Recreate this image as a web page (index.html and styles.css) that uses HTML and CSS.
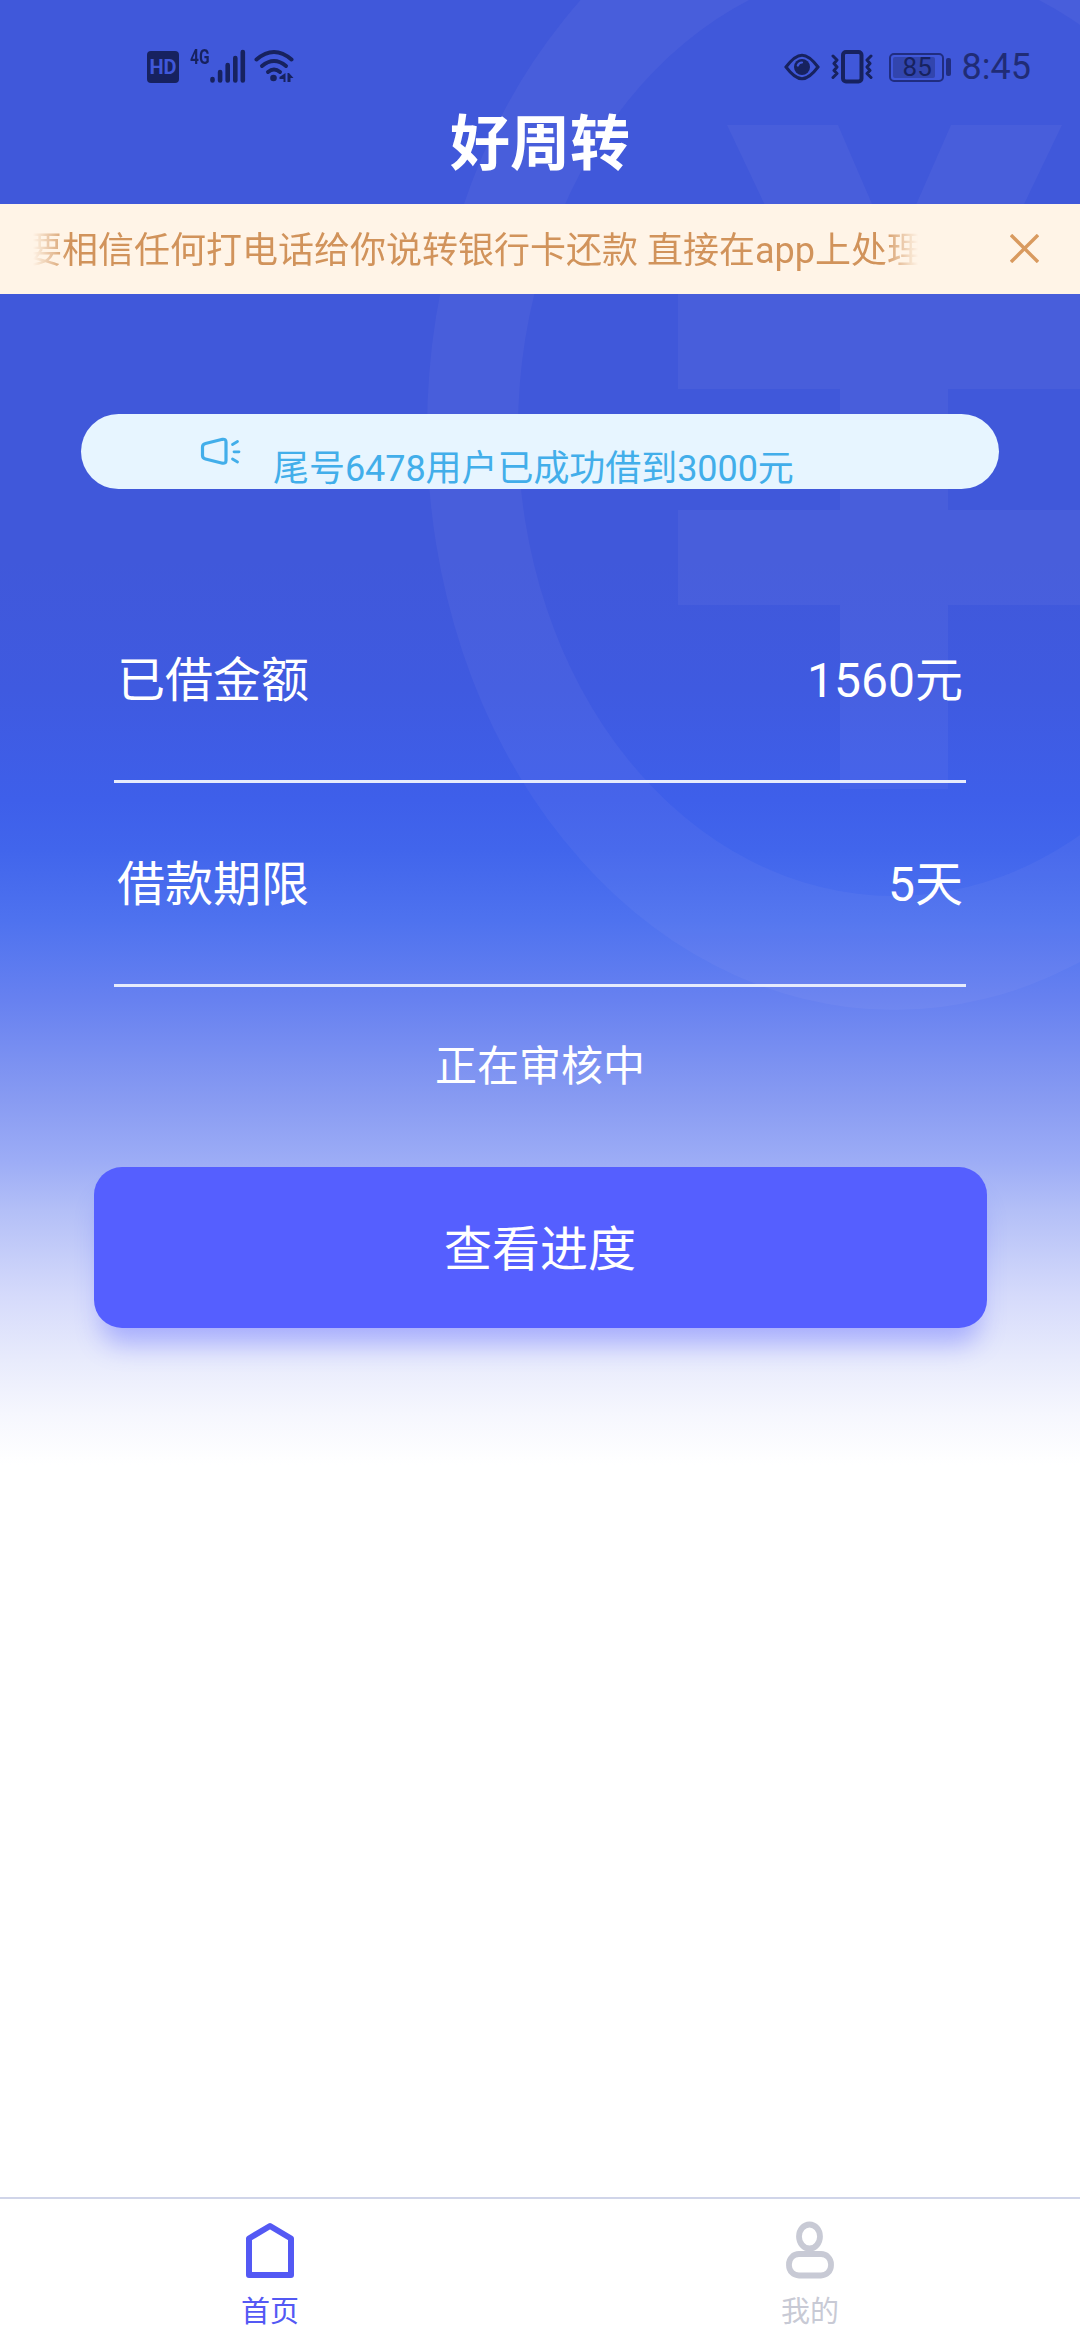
FILE: index.html
```
<!DOCTYPE html>
<html lang="zh-CN">
<head>
<meta charset="utf-8">
<title>好周转</title>
<link rel="stylesheet" href="styles.css">
</head>
<body>
<div class="app">
  <svg class="watermark" width="1080" height="1040" viewBox="0 0 1080 1040" aria-hidden="true">
    <path fill-rule="evenodd" d="M427 430a467 580 0 1 0 934 0a467 580 0 1 0 -934 0ZM518 430a376 466 0 1 1 752 0a376 466 0 1 1 -752 0Z"/>
    <path d="M727 125H838L894 255L951 125H1062L981 294H1110V389H948V510H1110V605H948V789H840V605H678V510H840V389H678V294H807Z"/>
  </svg>

  <div class="status">
    <div class="status-left">
      <svg class="hd" width="32" height="32" viewBox="0 0 32 32"><rect width="32" height="32" rx="4" fill="#17225f"/><text x="16" y="23" text-anchor="middle">HD</text></svg>
      <span class="network">4G</span>
      <svg class="signal" width="36" height="34" viewBox="0 0 36 34" fill="none" stroke="#17225f" stroke-width="4.6" stroke-linecap="round"><path d="M2.5 30v1.5M10.1 23v8.5M17.7 16v15.500M25.300 9v22.500M32.800 3v28.500"/></svg>
      <svg class="wifi" width="40" height="34" viewBox="0 0 40 34"><g fill="none" stroke="#17225f" stroke-width="4" stroke-linecap="round"><path d="M2.500 10.500Q20 -4.500 37.500 10.500"/><path d="M8 17Q20 7 32 17"/><path d="M14 23Q20 18 26 23"/></g><circle cx="19.500" cy="29" r="3.300" fill="#17225f"/><path d="M31.500 24v9h-2v-3h-4v-2zM33.500 24h1.500l4.500 5h-3v4h-3z" fill="#17225f"/></svg>
    </div>
    <div class="status-right">
      <svg width="36" height="28" viewBox="0 0 36 28"><path d="M2 14C8 6 13 2.200 18 2.200S28 6 34 14C28 22 23 25.800 18 25.800S8 22 2 14Z" fill="none" stroke="#17225f" stroke-width="3"/><circle cx="18" cy="14" r="8" fill="#17225f"/><path d="M13.800 12.500Q15 9.500 18 9.500" fill="none" stroke="#4058da" stroke-width="2.200" stroke-linecap="round"/></svg>
      <svg class="vibrate" width="42" height="34" viewBox="0 0 42 34" fill="none" stroke="#17225f" stroke-linecap="round" stroke-linejoin="round"><rect x="12" y="2" width="18.500" height="29.500" rx="3" stroke-width="4"/><path stroke-width="3" d="M2 6l4 4-3 3.500 3 3.500-3 3.500 3 3-4 4M40 6l-4 4 3 3.500-3 3.500 3 3.500-3 3 4 4"/></svg>
      <div class="battery"><span class="battery-level">85</span></div>
      <i class="battery-tip"></i>
      <span class="clock">8:45</span>
    </div>
  </div>

  <h1 class="title">好周转</h1>

  <div class="notice">
    <div class="notice-window"><span class="notice-text">要相信任何打电话给你说转银行卡还款 直接在app上处理</span></div>
    <svg class="close" width="29" height="29" viewBox="0 0 29 29" fill="none" stroke="#d99a5f" stroke-width="3.400"><path d="M1 1l27 27M28 1L1 28"/></svg>
  </div>

  <div class="pill">
    <svg class="horn" width="42" height="30" viewBox="0 0 42 30" fill="none" stroke="#42aeea" stroke-width="3.200" stroke-linejoin="round" stroke-linecap="round"><path d="M5.500 6.500L22.500 2.300Q26 1.800 26 5V23.500Q26 26.700 22.500 26.200L5.500 22Q2.500 21.200 2.500 18.500V10Q2.500 7.300 5.500 6.500Z"/><path stroke-width="2.800" d="M32.500 7.500L37.500 4.500M34 14.800H39M32.500 22L37.500 25"/></svg>
    <span class="pill-text">尾号6478用户已成功借到3000元</span>
  </div>

  <div class="rows">
    <div class="row"><span>已借金额</span><span>1560元</span></div>
    <div class="row"><span>借款期限</span><span>5天</span></div>
  </div>

  <p class="state">正在审核中</p>
  <button class="action">查看进度</button>

  <nav class="tabs">
    <div class="tab tab-active">
      <svg width="60" height="60" viewBox="0 0 60 60" fill="none" stroke="currentColor" stroke-width="6" stroke-linejoin="round"><path d="M9 19.500L30 7L51 19.500V56H9Z"/></svg>
      <span>首页</span>
    </div>
    <div class="tab">
      <svg width="60" height="60" viewBox="0 0 60 60" fill="none" stroke="currentColor" stroke-width="5.800"><ellipse cx="29.500" cy="17.500" rx="10.500" ry="12"/><rect x="9" y="35" width="42" height="21.500" rx="10"/></svg>
      <span>我的</span>
    </div>
  </nav>
</div>
</body>
</html>
```
FILE: styles.css
```
* { box-sizing: border-box; }
body {
  margin: 0;
  background: #fff;
  font-family: Roboto, "Noto Sans CJK SC", sans-serif;
}
.app {
  position: relative;
  display: flex;
  flex-direction: column;
  width: 1080px;
  height: 2340px;
  overflow: hidden;
  background: linear-gradient(180deg, #4058da 0, #4058da 560px, #3f5ae0 690px, #3e5fea 800px, #4165ec 850px, #4e72ef 920px, #6781f0 1000px, #889bf2 1100px, #9cacf6 1160px, #b3bff7 1210px, #d5dafb 1295px, #e8ebfc 1360px, #f6f7fe 1415px, #fff 1465px);
}
.watermark {
  position: absolute;
  top: 0;
  left: 0;
  fill: rgba(255, 225, 255, .042);
}
.status, .title, .notice, .pill, .rows, .state, .action, .tabs { position: relative; }
.status {
  display: flex;
  justify-content: space-between;
  height: 104px;
  padding: 49px 49px 0 147px;
  color: #17225f;
}
.status-left, .status-right { display: flex; align-items: flex-start; }
.hd { margin-top: 2px; }
.hd text { font: bold 20px Roboto, sans-serif; fill: #4058da; }
.network {
  width: 20px;
  margin: -4px 0 0 11px;
  font: bold 21px/24px Roboto, sans-serif;
  transform: scaleX(.74);
  transform-origin: left;
}
.wifi { margin-left: 8px; }
.status-right { align-items: center; height: 36px; }
.vibrate { margin-left: 11px; }
.battery {
  display: flex;
  width: 55px;
  height: 29px;
  margin-left: 16px;
  padding: 2px;
  border: 2px solid #202d80;
  border-radius: 5px;
}
.battery-level {
  width: 42px;
  padding-left: 10px;
  background: #3245ae;
  border-radius: 2px;
  font-size: 26px;
  line-height: 21px;
}
.battery-tip { width: 5px; height: 18px; margin-left: 2px; border-radius: 2px; background: #202d80; }
.clock { margin-left: 11px; font-size: 36px; line-height: 36px; color: #202c76; }
.title {
  height: 100px;
  margin: 0;
  font-size: 60px;
  line-height: 82px;
  text-align: center;
  color: #fff;
}
.notice {
  display: flex;
  align-items: center;
  justify-content: space-between;
  height: 90px;
  padding: 0 41px 0 33px;
  background: #fff4e7;
}
.notice-window {
  display: flex;
  width: 885px;
  margin-top: 4px;
  overflow: hidden;
  -webkit-mask-image: linear-gradient(90deg, transparent, #000 36px, #000 849px, transparent);
  mask-image: linear-gradient(90deg, transparent, #000 36px, #000 849px, transparent);
}
.notice-text {
  margin-left: -7px;
  font-size: 36px;
  line-height: 60px;
  white-space: nowrap;
  color: #d1935b;
}
.close { margin-bottom: 1px; }
.pill {
  display: flex;
  align-items: flex-start;
  height: 75px;
  margin: 120px 81px 0;
  padding-left: 119px;
  border-radius: 38px;
  background: #e7f5ff;
  color: #42aeea;
}
.horn { margin-top: 23px; }
.pill-text { margin: 25px 0 0 31px; font-size: 36px; line-height: 60px; letter-spacing: -.06px; }
.rows { margin: 90px 114px 0; }
.row {
  display: flex;
  justify-content: space-between;
  height: 204px;
  padding: 0 3px;
  border-bottom: 3px solid #e6ebfc;
  font-size: 48px;
  line-height: 203px;
  color: #fff;
}
.state { height: 84px; margin: 38px 0 0; font-size: 42px; line-height: 84px; text-align: center; color: #fff; }
.action {
  width: 893px;
  height: 161px;
  margin: 58px 0 0 93.5px;
  padding: 4px 0 0;
  border: 0;
  border-radius: 28px;
  background: #555fff;
  box-shadow: 0 24px 26px -8px rgba(85, 95, 255, .4);
  font: 48px/157px Roboto, "Noto Sans CJK SC", sans-serif;
  color: #fff;
}
.tabs {
  display: flex;
  height: 143px;
  margin-top: auto;
  border-top: 2px solid #d0d5e9;
  background: #fff;
}
.tab {
  flex: 1;
  display: flex;
  flex-direction: column;
  align-items: center;
  padding-top: 20px;
  font-size: 29px;
  line-height: 40px;
  color: #c8cad5;
}
.tab span { margin-top: 13px; }
.tab-active { color: #5459f4; }
```
